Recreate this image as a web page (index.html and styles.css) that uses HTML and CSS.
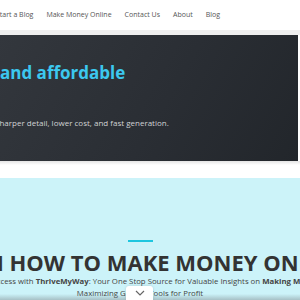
FILE: index.html
```html
<!DOCTYPE html>
<html lang="en">
<head>
    <meta charset="UTF-8">
    <meta name="viewport" content="width=device-width, initial-scale=1.0">
    <title>ThriveMyWay</title>
    <link rel="stylesheet" href="styles.css">
</head>
<body>
    <header class="site-nav">
        <ul class="nav-links">
            <li>Start a Blog</li>
            <li>Make Money Online</li>
            <li>Contact Us</li>
            <li>About</li>
            <li>Blog</li>
        </ul>
    </header>
    <div class="nav-rule"></div>
    <section class="hero">
        <h1 class="hero-title">and affordable</h1>
        <p class="hero-text">Sharper detail, lower cost, and fast generation.</p>
    </section>
    <div class="hero-shadow"></div>
    <section class="intro">
        <div class="intro-inner">
            <span class="intro-bar"></span>
            <h2 class="intro-title">Learn How to Make Money Online</h2>
            <p class="intro-line">Unlock Success with <b>ThriveMyWay</b>: Your One Stop Source for Valuable Insights on <b>Making Money</b></p>
            <p class="intro-line">Maximizing Growth Tools for Profit</p>
        </div>
    </section>
    <div class="bottom-fade"></div>
    <div class="scroll-tab">
        <svg width="10" height="6" viewBox="0 0 10 6"><path d="M1 1l4 4 4-4" fill="none" stroke="#666" stroke-width="1.2"/></svg>
    </div>
</body>
</html>
```

FILE: styles.css
```css
body {
    margin: 0;
    height: 300px;
    overflow: hidden;
    background: #fff;
    font-family: "Open Sans", Arial, sans-serif;
}
.site-nav {
    height: 30px;
    display: flex;
    align-items: center;
}
.nav-links {
    display: flex;
    gap: 13px;
    margin: -2px 0 0 -4px;
    padding: 0;
    list-style: none;
    font-size: 7px;
    color: #555;
    white-space: nowrap;
}
.nav-rule {
    height: 5px;
    background: #efefef;
}
.hero {
    width: 298px;
    height: 126px;
    box-sizing: border-box;
    padding-top: 26px;
    background: linear-gradient(120deg, #33373d 0%, #2a2e34 55%, #22262b 100%);
    overflow: hidden;
}
.hero-title {
    margin: 0;
    font-size: 17px;
    font-weight: 700;
    color: #3cc8ef;
    white-space: nowrap;
}
.hero-text {
    margin: 33px 0 0 -5px;
    font-size: 8px;
    color: #d0d2d4;
    white-space: nowrap;
}
.hero-shadow {
    height: 17px;
    background: linear-gradient(#e4e4e4, #fff 4px);
}
.intro {
    height: 122px;
    background: #ccf3f9;
    overflow: hidden;
}
.intro-inner {
    width: 280px;
    display: flex;
    flex-direction: column;
    align-items: center;
    padding-top: 62px;
}
.intro-bar {
    width: 25px;
    height: 2px;
    background: #1ec6df;
}
.intro-title {
    margin: 7px 0 0;
    font-size: 22px;
    font-weight: 700;
    line-height: 1.2;
    color: #333;
    text-transform: uppercase;
    white-space: nowrap;
}
.intro-line {
    margin: 0;
    font-size: 7.8px;
    line-height: 12px;
    color: #444;
    white-space: nowrap;
}
.bottom-fade {
    position: fixed;
    left: 0;
    right: 0;
    bottom: 0;
    height: 6px;
    background: linear-gradient(rgba(120, 130, 135, 0), rgba(120, 130, 135, 0.45));
}
.scroll-tab {
    position: fixed;
    left: 126px;
    bottom: 0;
    width: 27px;
    height: 14px;
    display: flex;
    justify-content: center;
    align-items: center;
    background: #fff;
    border-radius: 3px 3px 0 0;
    box-shadow: 0 0 3px rgba(0, 0, 0, 0.15);
}
```
